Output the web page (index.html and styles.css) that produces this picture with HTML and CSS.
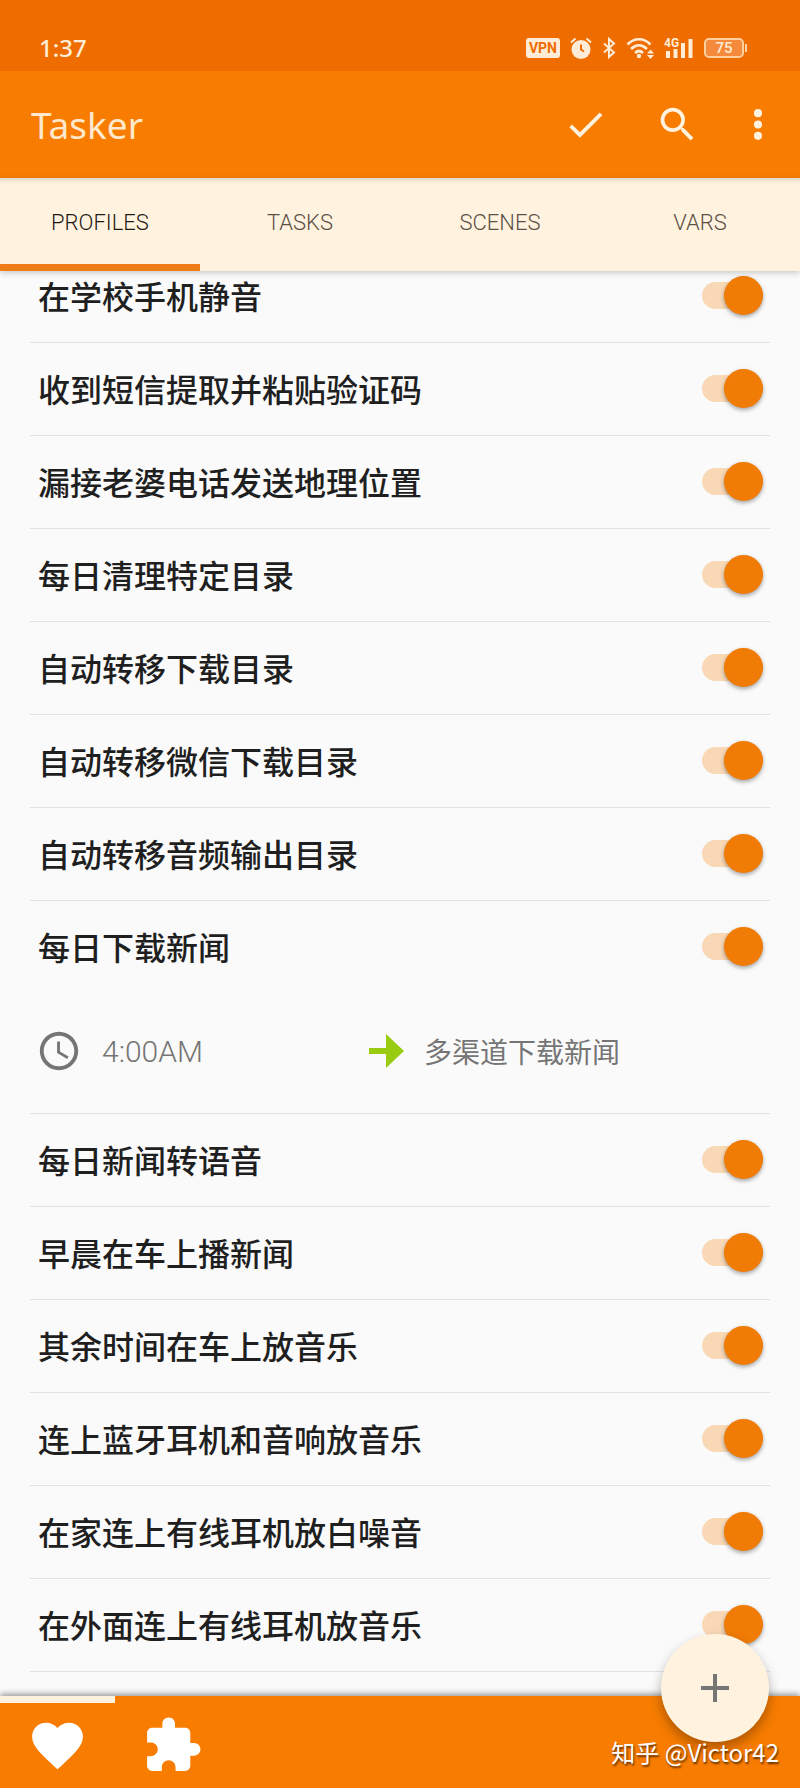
FILE: index.html
```html
<!DOCTYPE html>
<html lang="zh-CN">
<head>
    <meta charset="UTF-8">
    <meta name="viewport" content="width=device-width, initial-scale=1.0">
    <title>Tasker</title>
    <link rel="stylesheet" href="styles.css">
</head>
<body>

    <div class="status-bar">
        <span class="time">1:37</span>
        <div class="status-icons">
            <span class="vpn">VPN</span>
            <svg width="22" height="22" viewBox="0 0 22 22">
                <path d="M1 5.5L5.5 1.500M21 5.500L16.500 1.500" stroke="currentColor" stroke-width="2" fill="none"/>
                <circle cx="11" cy="12.500" r="9.500" fill="currentColor"/>
                <path d="M11 7.500V12.500L14 14.500" stroke="#ef6c00" stroke-width="2" fill="none"/>
            </svg>
            <svg width="14" height="22" viewBox="0 0 14 22">
                <path d="M2 6.500L12 15.500L7 20V2L12 6.500L2 15.500" stroke="currentColor" stroke-width="2" fill="none"/>
            </svg>
            <svg width="28" height="22" viewBox="0 0 28 22">
                <path d="M1.500 7.500C8 .500 18 .500 24.500 7.500M5 12C10 7 16 7 21 12M9 16C11.500 13.500 14.500 13.500 17 16" stroke="currentColor" stroke-width="2.600" fill="none"/>
                <circle cx="13" cy="19" r="2.200" fill="currentColor"/>
                <path d="M21 16.500L24.500 12.500L28 16.500zM21 18L24.500 22L28 18z" fill="currentColor"/>
            </svg>
            <svg width="30" height="22" viewBox="0 0 30 22">
                <text x="0" y="10" class="network">4G</text>
                <path d="M4 14V21M11.500 12V21M19 6V21M26.500 2V21" stroke="currentColor" stroke-width="4" fill="none"/>
            </svg>
            <span class="battery">75</span>
        </div>
    </div>

    <header class="app-bar">
        <h1>Tasker</h1>
        <div class="actions">
            <button type="button" aria-label="Apply">
                <svg width="45" height="45" viewBox="0 0 24 24"><path d="M9 16.170L4.830 12l-1.420 1.410L9 19 21 7l-1.410-1.410z"/></svg>
            </button>
            <button type="button" aria-label="Search">
                <svg width="45" height="45" viewBox="0 0 24 24"><path d="M15.500 14h-.79l-.28-.27A6.471 6.471 0 0 0 16 9.500 6.500 6.500 0 1 0 9.500 16c1.610 0 3.090-.59 4.230-1.570l.27.28v.79l5 4.990L20.490 19l-4.990-5zm-6 0C7.010 14 5 11.990 5 9.500S7.010 5 9.500 5 14 7.010 14 9.500 11.990 14 9.500 14z"/></svg>
            </button>
            <button type="button" aria-label="More">
                <svg width="22" height="45" viewBox="6 0 12 24"><circle cx="12" cy="5.800" r="2.200"/><circle cx="12" cy="12" r="2.200"/><circle cx="12" cy="18.200" r="2.200"/></svg>
            </button>
        </div>
    </header>

    <nav class="tabs">
        <a href="#profiles" class="active">PROFILES</a>
        <a href="#tasks">TASKS</a>
        <a href="#scenes">SCENES</a>
        <a href="#vars">VARS</a>
    </nav>

    <main class="content" id="profiles">
        <ul class="profiles">
            <li><label class="profile">在学校手机静音<input type="checkbox" class="switch" checked></label></li>
            <li><label class="profile">收到短信提取并粘贴验证码<input type="checkbox" class="switch" checked></label></li>
            <li><label class="profile">漏接老婆电话发送地理位置<input type="checkbox" class="switch" checked></label></li>
            <li><label class="profile">每日清理特定目录<input type="checkbox" class="switch" checked></label></li>
            <li><label class="profile">自动转移下载目录<input type="checkbox" class="switch" checked></label></li>
            <li><label class="profile">自动转移微信下载目录<input type="checkbox" class="switch" checked></label></li>
            <li><label class="profile">自动转移音频输出目录<input type="checkbox" class="switch" checked></label></li>
            <li>
                <label class="profile">每日下载新闻<input type="checkbox" class="switch" checked></label>
                <div class="details">
                    <div class="context">
                        <svg width="46" height="46" viewBox="0 0 24 24"><path d="M11.990 2C6.470 2 2 6.480 2 12s4.470 10 9.990 10C17.520 22 22 17.520 22 12S17.520 2 11.990 2zM12 20c-4.420 0-8-3.580-8-8s3.580-8 8-8 8 3.580 8 8-3.580 8-8 8zm.5-13H11v6l5.250 3.150.75-1.230-4.500-2.670z"/></svg>
                        <span>4:00AM</span>
                    </div>
                    <div class="task">
                        <svg width="35" height="34" viewBox="0 0 35 34"><path d="M0 14H17V0L35 17L17 34V20H0z"/></svg>
                        <span>多渠道下载新闻</span>
                    </div>
                </div>
            </li>
            <li><label class="profile">每日新闻转语音<input type="checkbox" class="switch" checked></label></li>
            <li><label class="profile">早晨在车上播新闻<input type="checkbox" class="switch" checked></label></li>
            <li><label class="profile">其余时间在车上放音乐<input type="checkbox" class="switch" checked></label></li>
            <li><label class="profile">连上蓝牙耳机和音响放音乐<input type="checkbox" class="switch" checked></label></li>
            <li><label class="profile">在家连上有线耳机放白噪音<input type="checkbox" class="switch" checked></label></li>
            <li><label class="profile">在外面连上有线耳机放音乐<input type="checkbox" class="switch" checked></label></li>
        </ul>
    </main>

    <footer class="bottom-bar">
        <a href="#favourites" class="project active" aria-label="Favourites">
            <svg width="61" height="61" viewBox="0 0 24 24"><path d="M12 21.350l-1.450-1.320C5.400 15.360 2 12.280 2 8.500 2 5.420 4.420 3 7.500 3c1.740 0 3.410.81 4.500 2.090C13.090 3.810 14.760 3 16.500 3 19.580 3 22 5.420 22 8.500c0 3.780-3.400 6.860-8.550 11.540L12 21.350z"/></svg>
        </a>
        <a href="#plugins" class="project" aria-label="Plugins">
            <svg width="61" height="61" viewBox="0 0 24 24"><path d="M20.500 11H19V7c0-1.100-.9-2-2-2h-4V3.500C13 2.120 11.880 1 10.500 1S8 2.120 8 3.500V5H4c-1.100 0-1.990.9-1.990 2v3.800H3.500c1.490 0 2.700 1.210 2.700 2.700s-1.210 2.700-2.700 2.700H2V20c0 1.100.9 2 2 2h3.800v-1.500c0-1.490 1.210-2.700 2.700-2.700 1.490 0 2.700 1.210 2.700 2.700V22H17c1.100 0 2-.9 2-2v-4h1.500c1.380 0 2.500-1.120 2.500-2.500S21.880 11 20.500 11z"/></svg>
        </a>
    </footer>

    <button type="button" class="fab" aria-label="Add profile">
        <svg width="28" height="28" viewBox="0 0 28 28"><path d="M14 0V28M0 14H28" stroke="currentColor" stroke-width="4"/></svg>
    </button>
    <span class="watermark">知乎 @Victor42</span>

</body>
</html>
```

FILE: styles.css
```css
* {
    box-sizing: border-box;
}

body {
    display: flex;
    flex-direction: column;
    height: 100vh;
    margin: 0;
    font-family: Roboto, "Noto Sans CJK SC", sans-serif;
    background-color: #fafafa;
    color: #1f1f1f;
}

svg {
    display: block;
    fill: currentColor;
}

button {
    padding: 0;
    border: none;
    background: none;
    color: inherit;
    cursor: pointer;
}

a {
    color: inherit;
    text-decoration: none;
}

.status-bar {
    display: flex;
    justify-content: space-between;
    align-items: center;
    height: 71px;
    padding: 24px 56px 0 39px;
    background-color: #ef6c00;
    color: #ffecd6;
}

.time {
    font-family: "Noto Sans", sans-serif;
    font-size: 24px;
    font-weight: 500;
}

.status-icons {
    display: flex;
    align-items: center;
    gap: 10px;
}

.vpn {
    padding: 0 3px;
    border-radius: 3px;
    background-color: #ffecd6;
    color: #ef6c00;
    font-size: 14px;
    font-weight: 700;
    line-height: 20px;
}

.network {
    font-size: 12px;
    font-weight: 700;
}

.battery {
    position: relative;
    width: 40px;
    border: 2px solid #ffd0a0;
    border-radius: 5px;
    background-color: #f58a3c;
    font-size: 15px;
    font-weight: 500;
    line-height: 16px;
    text-align: center;
}

.battery::after {
    content: "";
    position: absolute;
    top: 4px;
    right: -5px;
    width: 2px;
    height: 8px;
    background-color: #ffd0a0;
}

.app-bar {
    display: flex;
    justify-content: space-between;
    align-items: center;
    height: 107px;
    padding: 0 31px;
    background-color: #f77c00;
    color: #fff3e0;
}

.app-bar h1 {
    margin: 0;
    font-family: "Noto Sans", sans-serif;
    font-size: 37px;
    font-weight: 400;
    color: #ffe8cc;
}

.actions {
    display: flex;
    gap: 47px;
}

.tabs {
    position: relative;
    display: flex;
    height: 93px;
    background-color: #fff3e0;
    box-shadow: inset 0 6px 5px -4px rgba(0, 0, 0, 0.15), 0 2px 6px rgba(0, 0, 0, 0.2);
    font-size: 22px;
    font-weight: 300;
    color: #5c5045;
}

.tabs a {
    flex: 1;
    display: flex;
    justify-content: center;
    align-items: center;
    padding-top: 3px;
    border-bottom: 7px solid transparent;
}

.tabs .active {
    border-color: #ed7d14;
    color: #1f1a14;
}

.content {
    flex: 1;
    overflow: hidden;
    padding: 0 30px;
}

/* list is scrolled a little under the tabs */
.profiles {
    margin: -21px 0 0;
    padding: 0;
    list-style: none;
}

.profiles li {
    border-bottom: 1px solid #e2e2e2;
}

.profile {
    display: flex;
    justify-content: space-between;
    align-items: center;
    height: 92px;
    padding: 0 7px 2px 8px;
    font-family: "Noto Sans CJK SC", sans-serif;
    font-size: 32px;
    font-weight: 500;
}

.switch {
    appearance: none;
    display: grid;
    align-items: center;
    justify-items: end;
    width: 61px;
    height: 27px;
    margin: 0;
    border-radius: 14px;
    background-color: #f9d8b6;
}

.switch::before {
    content: "";
    width: 39px;
    height: 39px;
    margin: -6px 0;
    border-radius: 50%;
    background-color: #f07b05;
    box-shadow: 0 2px 4px rgba(0, 0, 0, 0.35);
}

.details {
    display: grid;
    grid-template-columns: 333px 1fr;
    align-items: center;
    height: 120px;
    padding: 0 0 4px 6px;
    font-size: 30px;
    font-weight: 300;
    color: #757575;
}

.context,
.task {
    display: flex;
    align-items: center;
    gap: 20px;
}

.task {
    font-size: 28px;
    font-weight: 400;
}

.task svg {
    color: #99cc11;
}

.bottom-bar {
    display: flex;
    height: 92px;
    background-color: #f77c00;
    box-shadow: 0 -2px 6px rgba(0, 0, 0, 0.4);
    color: #fff;
}

.project {
    display: flex;
    justify-content: center;
    align-items: center;
    width: 115px;
    border-top: 7px solid transparent;
}

.project.active {
    border-color: #fff3e0;
}

.fab {
    position: absolute;
    right: 31px;
    bottom: 46px;
    display: flex;
    justify-content: center;
    align-items: center;
    width: 108px;
    height: 108px;
    border-radius: 50%;
    background-color: #fff3e0;
    box-shadow: 0 6px 12px rgba(0, 0, 0, 0.3);
    color: #757575;
}

.watermark {
    position: absolute;
    right: 21px;
    bottom: 19px;
    font-family: "Noto Sans CJK SC", sans-serif;
    font-size: 24px;
    line-height: 34px;
    color: #fff;
    text-shadow: 1px 2px 2px rgba(0, 0, 0, 0.6);
}
```
